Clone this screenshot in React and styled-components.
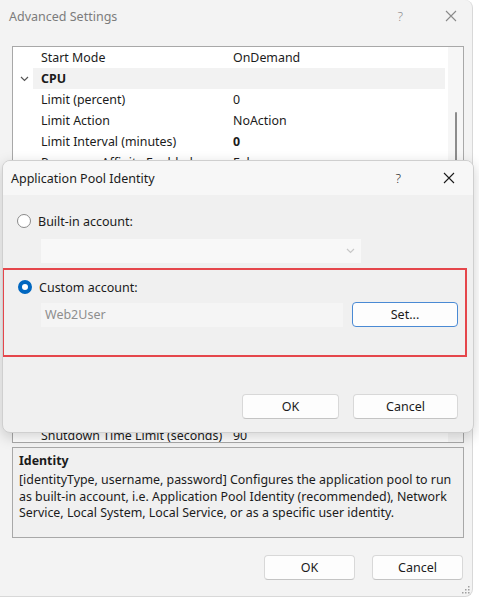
import styled, { createGlobalStyle } from "styled-components";

const GlobalStyle = createGlobalStyle`
  html, body {
    margin: 0;
    padding: 0;
    background: #ffffff;
  }
  body {
    font-family: "Noto Sans", "Open Sans", sans-serif;
    font-size: 12.4px;
    color: #1b1b1b;
  }
`;

const rows = [
  { label: "Start Mode", value: "OnDemand" },
  { label: "CPU", category: true },
  { label: "Limit (percent)", value: "0" },
  { label: "Limit Action", value: "NoAction" },
  { label: "Limit Interval (minutes)", value: "0", changed: true },
  { label: "Processor Affinity Enabled", value: "False" },
  { label: "Processor Affinity Mask", value: "4294967295" },
  { label: "Processor Affinity Mask (64-bit option)", value: "4294967295" },
  { label: "Process Model", category: true },
  { label: "Generate Process Model Event Log Entry", value: "" },
  { label: "Identity", value: "ApplicationPoolIdentity" },
  { label: "Idle Time-out (minutes)", value: "20" },
  { label: "Idle Time-out Action", value: "Terminate" },
  { label: "Load User Profile", value: "True" },
  { label: "Maximum Worker Processes", value: "1" },
  { label: "Ping Enabled", value: "True" },
  { label: "Ping Maximum Response Time (seconds)", value: "90" },
  { label: "Ping Period (seconds)", value: "30" },
  { label: "Shutdown Time Limit (seconds)", value: "90" },
];

const HelpIcon = () => <Glyph>?</Glyph>;

const CloseIcon = () => (
  <svg width="12" height="12" viewBox="0 0 12 12">
    <path d="M1 1 L11 11 M11 1 L1 11" stroke="currentColor" strokeWidth="1.1" fill="none" />
  </svg>
);

const Chevron = ({ color = "#555" }) => (
  <svg width="9" height="6" viewBox="0 0 9 6">
    <path d="M1 1 L4.5 4.5 L8 1" stroke={color} strokeWidth="1.2" fill="none" />
  </svg>
);

const App = () => {
  return (
    <>
      <GlobalStyle />
      <Window>
        <TitleBar>
          <Title dim>Advanced Settings</Title>
          <Controls dim>
            <HelpIcon />
            <CloseIcon />
          </Controls>
        </TitleBar>

        <Grid>
          <GridRows>
            {rows.map((row) =>
              row.category ? (
                <CategoryRow key={row.label}>
                  <Gutter>
                    <Chevron />
                  </Gutter>
                  <Label bold>{row.label}</Label>
                </CategoryRow>
              ) : (
                <Row key={row.label}>
                  <Gutter />
                  <Label>{row.label}</Label>
                  <Value bold={row.changed}>{row.value}</Value>
                </Row>
              )
            )}
          </GridRows>
          <ScrollTrack>
            <Thumb />
          </ScrollTrack>
        </Grid>

        <Description>
          <DescTitle>Identity</DescTitle>
          <DescText>
            [identityType, username, password] Configures the application pool to run
            as built-in account, i.e. Application Pool Identity (recommended), Network
            Service, Local System, Local Service, or as a specific user identity.
          </DescText>
        </Description>

        <Footer>
          <Button>OK</Button>
          <Button>Cancel</Button>
        </Footer>

        <Grip>
          <svg width="8" height="8" viewBox="0 0 8 8">
            {[
              [6, 0], [6, 3], [3, 3], [6, 6], [3, 6], [0, 6],
            ].map(([x, y]) => (
              <rect key={`${x}-${y}`} x={x} y={y} width="1.5" height="1.5" fill="#a0a0a0" />
            ))}
          </svg>
        </Grip>

        <Dialog>
          <DialogTitleBar>
            <Title>Application Pool Identity</Title>
            <Controls>
              <HelpIcon />
              <CloseIcon />
            </Controls>
          </DialogTitleBar>
          <DialogBody>
            <Option>
              <Radio />
              <span>Built-in account:</span>
            </Option>
            <Select>
              <Chevron color="#c8c8c8" />
            </Select>

            <Highlight>
              <Option>
                <Radio checked />
                <span>Custom account:</span>
              </Option>
              <AccountRow>
                <TextField>Web2User</TextField>
                <Button width={106} focused>Set...</Button>
              </AccountRow>
            </Highlight>

            <DialogFooter>
              <Button width={97}>OK</Button>
              <Button width={105}>Cancel</Button>
            </DialogFooter>
          </DialogBody>
        </Dialog>
      </Window>
    </>
  );
};

export default App;

const Window = styled.div`
  position: relative;
  width: 473px;
  height: 597px;
  box-sizing: border-box;
  background: #f3f3f3;
  border-right: 1px solid #d8d8d8;
  border-bottom: 1px solid #d8d8d8;
  border-top-right-radius: 8px;
  border-bottom-right-radius: 8px;
  display: flex;
  flex-direction: column;
`;

const TitleBar = styled.div`
  height: 32px;
  display: flex;
  align-items: center;
  justify-content: space-between;
  padding: 0 15px 0 9px;
`;

const Title = styled.div`
  font-size: 12.5px;
  color: ${(p) => (p.dim ? "#7c7c7c" : "#1b1b1b")};
`;

const Controls = styled.div`
  display: flex;
  align-items: center;
  gap: 42px;
  color: ${(p) => (p.dim ? "#8a8a8a" : "#1b1b1b")};
`;

const Glyph = styled.span`
  font-size: 13px;
  font-weight: 300;
`;

const Grid = styled.div`
  margin: 14px 8px 0 12px;
  height: 397px;
  box-sizing: border-box;
  border: 1px solid #a8a8a8;
  background: #ffffff;
  display: flex;
  overflow: hidden;
`;

const GridRows = styled.div`
  flex: 1;
  display: flex;
  flex-direction: column;
  padding-right: 3px;
`;

const Row = styled.div`
  height: 21px;
  flex-shrink: 0;
  display: flex;
  align-items: center;
  white-space: nowrap;
`;

const CategoryRow = styled(Row)`
  background: linear-gradient(to right, #ffffff 20px, #f2f2f2 20px);
`;

const Gutter = styled.div`
  width: 20px;
  flex-shrink: 0;
  display: flex;
  justify-content: center;
  padding-left: 1px;
`;

const Label = styled.div`
  width: 192px;
  padding-left: 7px;
  flex-shrink: 0;
  overflow: hidden;
  font-weight: ${(p) => (p.bold ? 700 : 400)};
`;

const Value = styled.div`
  font-weight: ${(p) => (p.bold ? 700 : 400)};
`;

const ScrollTrack = styled.div`
  width: 15px;
  flex-shrink: 0;
  background: #f6f6f6;
  display: flex;
  justify-content: center;
`;

const Thumb = styled.div`
  width: 2px;
  margin-top: 65px;
  height: 120px;
  border-radius: 1px;
  background: #8c8c8c;
`;

const Description = styled.div`
  margin: 4px 8px 0 12px;
  height: 91px;
  box-sizing: border-box;
  border: 1px solid #a8a8a8;
  background: #f0f0f0;
  padding: 4px 6px;
`;

const DescTitle = styled.div`
  font-weight: 700;
  line-height: 17px;
`;

const DescText = styled.div`
  margin-top: 3px;
  line-height: 16.5px;
`;

const Footer = styled.div`
  display: flex;
  justify-content: flex-end;
  gap: 17px;
  padding: 17px 9px 0 0;
`;

const Button = styled.button`
  width: ${(p) => p.width || 91}px;
  height: 25px;
  box-sizing: border-box;
  font-family: inherit;
  font-size: 12.5px;
  color: #1b1b1b;
  background: #fdfdfd;
  border: 1px solid ${(p) => (p.focused ? "#4a8ad4" : "#d8d8d8")};
  border-bottom-color: ${(p) => (p.focused ? "#4a8ad4" : "#c4c4c4")};
  border-radius: 4px;
  padding: 0;
`;

const Grip = styled.div`
  position: absolute;
  right: 2px;
  bottom: 2px;
  line-height: 0;
`;

const Dialog = styled.div`
  position: absolute;
  top: 160px;
  left: 2px;
  width: 472px;
  height: 273px;
  box-sizing: border-box;
  background: #f0f0f0;
  border: 1px solid #cfcfcf;
  border-radius: 8px;
  box-shadow: 0 4px 14px rgba(0, 0, 0, 0.18);
  overflow: hidden;
  display: flex;
  flex-direction: column;
`;

const DialogTitleBar = styled.div`
  height: 34px;
  flex-shrink: 0;
  background: #f7f7f7;
  display: flex;
  align-items: center;
  justify-content: space-between;
  padding: 0 18px 0 8px;
`;

const DialogBody = styled.div`
  flex: 1;
  display: flex;
  flex-direction: column;
  padding-top: 16px;
`;

const Option = styled.label`
  display: flex;
  align-items: center;
  gap: 7px;
  padding-left: 14px;
  height: 20px;
  font-size: 12.5px;
`;

const Radio = styled.span`
  width: 14px;
  height: 14px;
  box-sizing: border-box;
  border-radius: 50%;
  background: #ffffff;
  border: ${(p) => (p.checked ? "4px solid #0067c0" : "1px solid #8a8a8a")};
`;

const Select = styled.div`
  margin: 8px 0 0 38px;
  width: 320px;
  height: 24px;
  background: #f8f8f8;
  display: flex;
  align-items: center;
  justify-content: flex-end;
  padding-right: 6px;
  box-sizing: border-box;
`;

const Highlight = styled.div`
  margin: 5px 6px 0 -1px;
  height: 89px;
  box-sizing: border-box;
  border: 2px solid #e5464b;
  padding-top: 7px;
`;

const AccountRow = styled.div`
  display: flex;
  align-items: center;
  gap: 9px;
  margin: 5px 0 0 37px;
`;

const TextField = styled.div`
  width: 302px;
  height: 24px;
  box-sizing: border-box;
  padding-left: 4px;
  display: flex;
  align-items: center;
  background: #f5f5f5;
  color: #8e8e8e;
  font-size: 12.5px;
`;

const DialogFooter = styled.div`
  display: flex;
  justify-content: flex-end;
  gap: 14px;
  padding: 37px 15px 0 0;
`;
